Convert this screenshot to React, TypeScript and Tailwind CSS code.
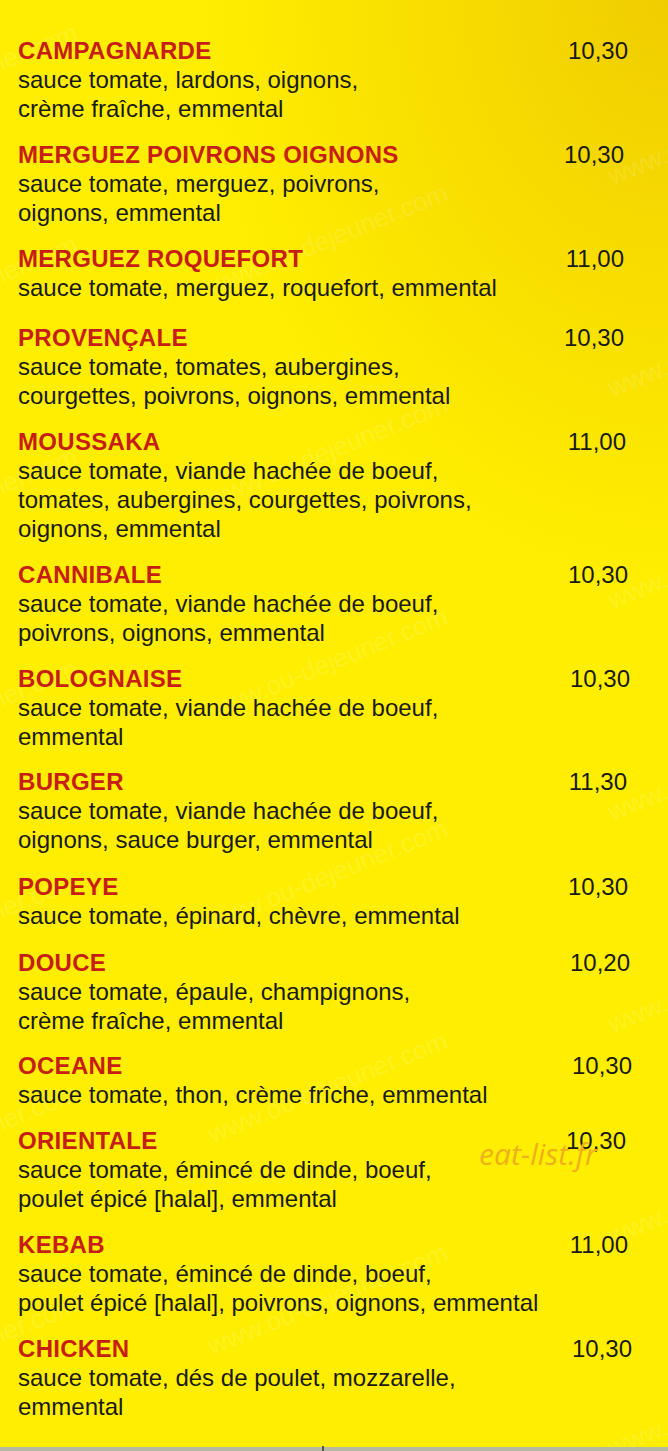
import React from "react";

type Item = { name: string; lines: string[]; price: string; pr: string; mb?: string };

const items: Item[] = [
  { name: "CAMPAGNARDE", lines: ["sauce tomate, lardons, oignons,", "crème fraîche, emmental"], price: "10,30", pr: "mr-[40px]" },
  { name: "MERGUEZ POIVRONS OIGNONS", lines: ["sauce tomate, merguez, poivrons,", "oignons, emmental"], price: "10,30", pr: "mr-[44px]" },
  { name: "MERGUEZ ROQUEFORT", lines: ["sauce tomate, merguez, roquefort, emmental"], price: "11,00", pr: "mr-[44px]", mb: "mb-[4px]" },
  { name: "PROVENÇALE", lines: ["sauce tomate, tomates, aubergines,", "courgettes, poivrons, oignons, emmental"], price: "10,30", pr: "mr-[44px]" },
  { name: "MOUSSAKA", lines: ["sauce tomate, viande hachée de boeuf,", "tomates, aubergines, courgettes, poivrons,", "oignons, emmental"], price: "11,00", pr: "mr-[42px]" },
  { name: "CANNIBALE", lines: ["sauce tomate, viande hachée de boeuf,", "poivrons, oignons, emmental"], price: "10,30", pr: "mr-[40px]" },
  { name: "BOLOGNAISE", lines: ["sauce tomate, viande hachée de boeuf,", "emmental"], price: "10,30", pr: "mr-[38px]", mb: "mb-[-1px]" },
  { name: "BURGER", lines: ["sauce tomate, viande hachée de boeuf,", "oignons, sauce burger, emmental"], price: "11,30", pr: "mr-[41px]", mb: "mb-[1px]" },
  { name: "POPEYE", lines: ["sauce tomate, épinard, chèvre, emmental"], price: "10,30", pr: "mr-[40px]", mb: "mb-[1px]" },
  { name: "DOUCE", lines: ["sauce tomate, épaule, champignons,", "crème fraîche, emmental"], price: "10,20", pr: "mr-[38px]", mb: "mb-[-1px]" },
  { name: "OCEANE", lines: ["sauce tomate, thon, crème frîche, emmental"], price: "10,30", pr: "mr-[36px]" },
  { name: "ORIENTALE", lines: ["sauce tomate, émincé de dinde, boeuf,", "poulet épicé [halal], emmental"], price: "10,30", pr: "mr-[42px]" },
  { name: "KEBAB", lines: ["sauce tomate, émincé de dinde, boeuf,", "poulet épicé [halal], poivrons, oignons, emmental"], price: "11,00", pr: "mr-[40px]" },
  { name: "CHICKEN", lines: ["sauce tomate, dés de poulet, mozzarelle,", "emmental"], price: "10,30", pr: "mr-[36px]" },
];

const rows = [0, 1, 2, 3, 4, 5, 6];

export default function App() {
  return (
    <div
      className="relative w-[668px] h-[1451px] overflow-hidden bg-[#ffee00]"
      style={{ fontFamily: '"Liberation Sans", Arial, sans-serif' }}
    >
      <div className="absolute inset-0 bg-[radial-gradient(ellipse_70%_40%_at_100%_0%,#f0cd00_0%,#f7dc00_45%,rgba(255,238,0,0)_100%)]" />

      {/* watermarks */}
      {rows.map((r) => (
        <div key={r} className="pointer-events-none absolute left-0 w-[668px]" style={{ top: 20 + r * 212 }}>
          <div className="absolute left-[-170px] top-[40px] -rotate-[22deg] text-[26px] text-white/15 whitespace-nowrap">
            www.ou-dejeuner.com
          </div>
          <div className="absolute left-[200px] top-[200px] -rotate-[22deg] text-[26px] text-white/15 whitespace-nowrap">
            www.ou-dejeuner.com
          </div>
          <div className="absolute left-[600px] top-[90px] -rotate-[22deg] text-[26px] text-white/15 whitespace-nowrap">
            www.ou-dejeuner.com
          </div>
        </div>
      ))}

      <div className="relative flex flex-col gap-[17px] pt-[36px] pl-[18px]">
        {items.map((it) => (
          <div key={it.name} className={`flex justify-between ${it.mb ?? ""}`}>
            <div className="flex flex-col">
              <div className="text-[24px] leading-[29px] font-bold text-[#c61e14] tracking-[0.3px]">{it.name}</div>
              {it.lines.map((l) => (
                <div key={l} className="text-[24px] leading-[29px] text-[#1a1a14]">
                  {l}
                </div>
              ))}
            </div>
            <div className={`text-[24px] leading-[29px] text-[#1a1a14] ${it.pr}`}>{it.price}</div>
          </div>
        ))}
      </div>

      <div
        className="absolute left-[479px] top-[1131px] text-[30px] italic text-[#f0b01c]"
        style={{ fontFamily: '"Open Sans", sans-serif', fontWeight: 400 }}
      >
        eat-list.fr
      </div>

      <div className="absolute bottom-0 left-0 h-[4px] w-full bg-[#b5b9a4]" />
      <div className="absolute bottom-0 left-[322px] h-[5px] w-[2px] bg-[#555]" />
    </div>
  );
}
